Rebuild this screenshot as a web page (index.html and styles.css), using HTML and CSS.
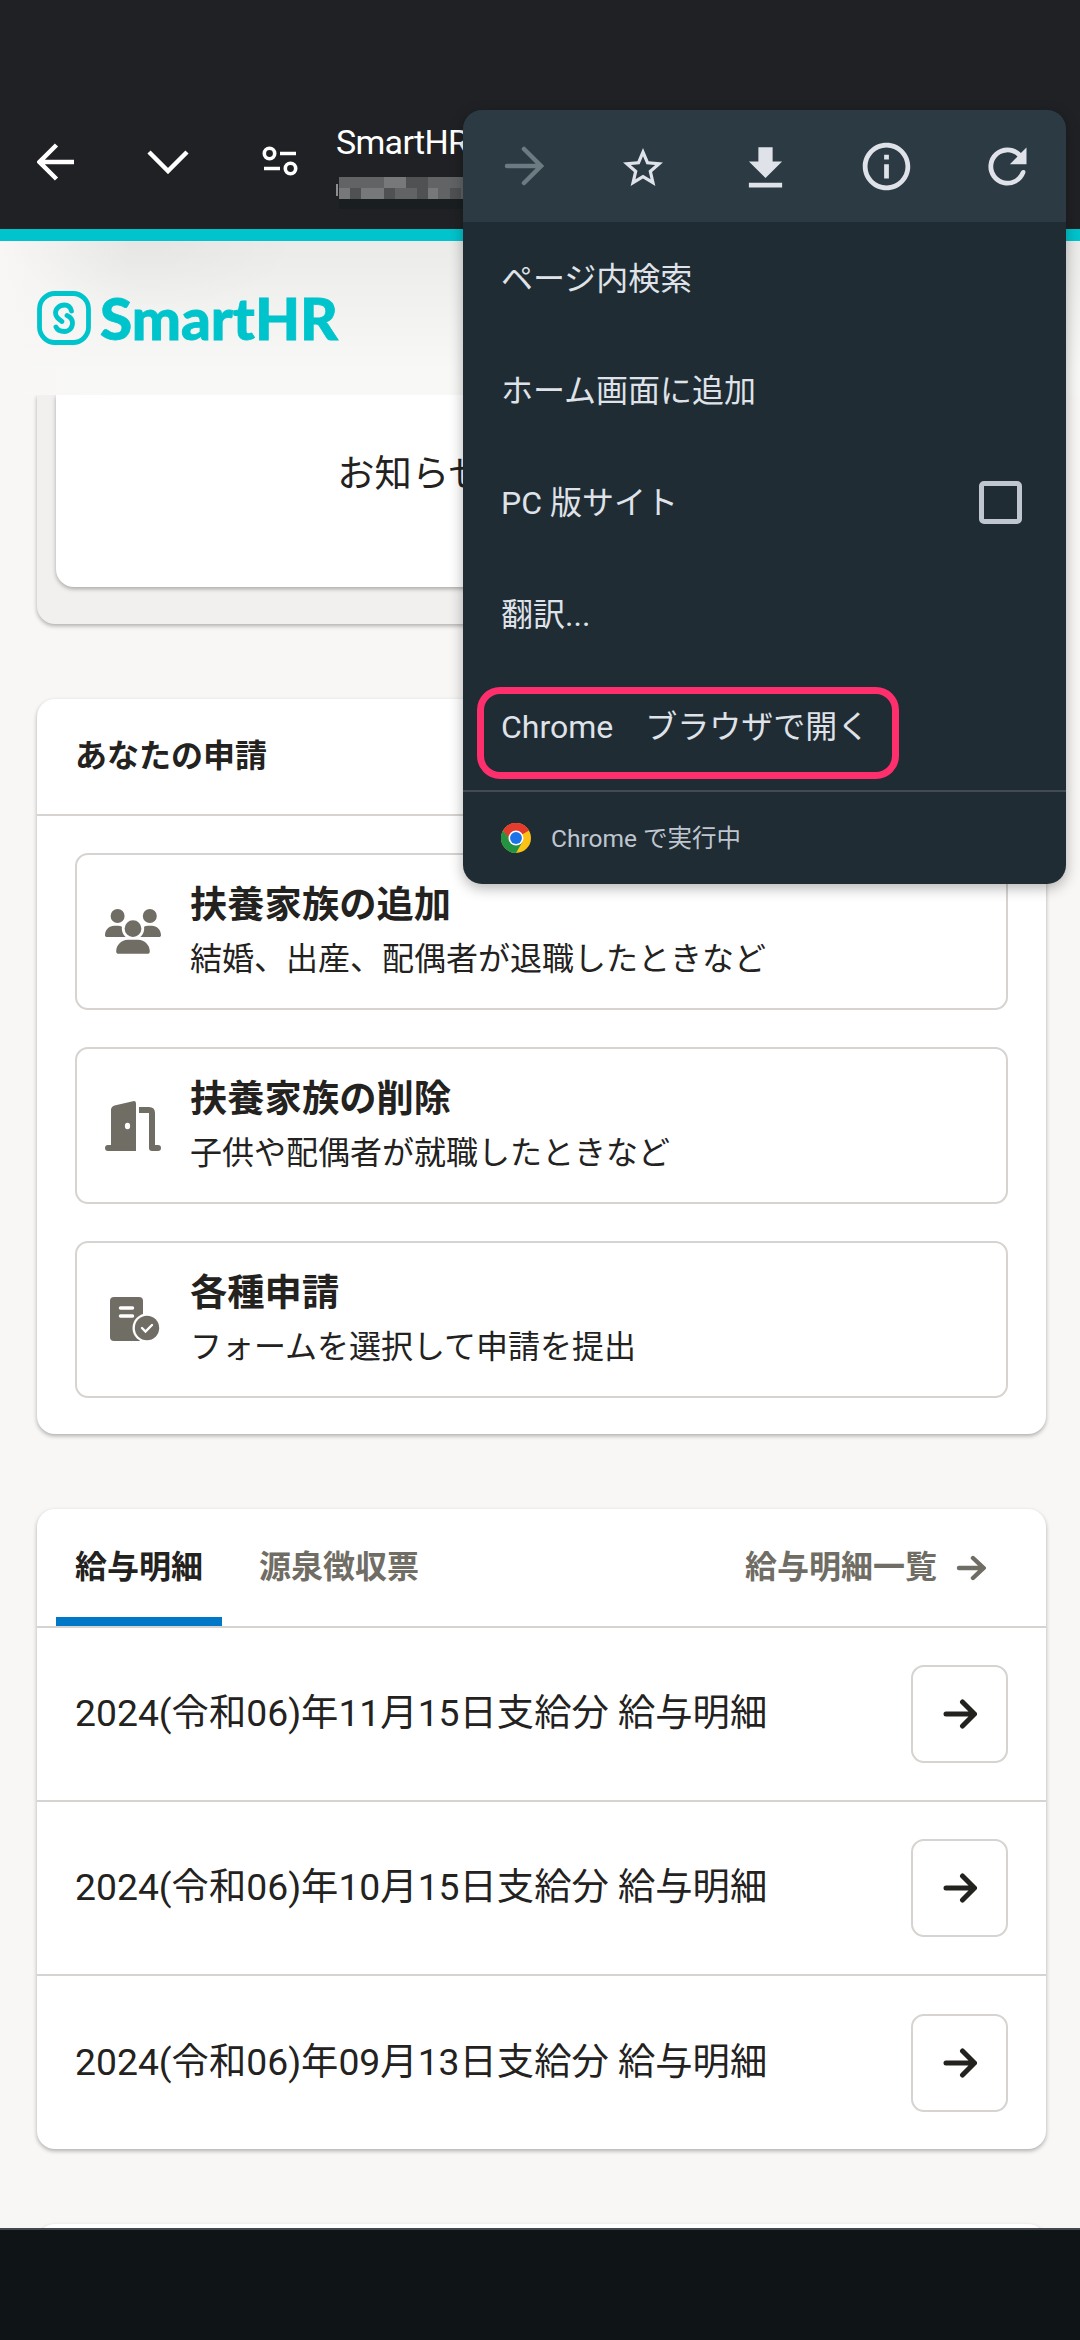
FILE: index.html
```html
<!DOCTYPE html>
<html lang="ja">
<head>
    <meta charset="UTF-8">
    <title>SmartHR</title>
    <link rel="stylesheet" href="styles.css">
</head>
<body>
    <div class="screen">
        <!-- ブラウザのツールバー -->
        <div class="toolbar">
            <svg class="tool-icon back" viewBox="0 0 38 38"><path d="M37 19H4M19.500 2L2.500 19l17 17" /></svg>
            <svg class="tool-icon down" viewBox="0 0 42 24"><path d="M2 2l19 19L40 2" /></svg>
            <svg class="tool-icon tune" viewBox="0 0 36 30"><circle cx="7.500" cy="7.500" r="5.200" /><circle cx="28.500" cy="22.500" r="5.200" /><path d="M18 7.500h16M2 22.500h16" /></svg>
            <div class="address">
                <div class="address-title">SmartHR</div>
                <svg class="address-mask" viewBox="0 0 132 32">
                    <path fill="#191f20" d="M3 22h129v10H3z" />
                    <path fill="#626365" d="M3 0h129v22H3z" />
                    <path fill="#77787a" d="M48 0h22v11H48zM3 11h11v11H3zM25 11h23v11H25zM91 11h11v11H91z" />
                    <path fill="#505153" d="M14 11h11v11H14zM48 11h11v11H48zM70 0h11v11H70zM81 0h11v22H81zM114 11h11v11h-11z" />
                    <path fill="#8d8e90" d="M0 7h2v12H0z" />
                </svg>
            </div>
        </div>

        <div class="page">
            <div class="header">
                <svg class="logo-mark" viewBox="0 0 54 54">
                    <rect x="2.500" y="2.500" width="49" height="49" rx="15.500" />
                    <path d="M34.500 20C33.500 16 31 14 27.500 14C22 14 18.500 18 18.500 22C18.500 26 21.500 28 25 30.500M30 24.500C33.500 26 35.500 28.500 35.500 32C35.500 37 32 40.500 27.500 40.500C23.500 40.500 20.500 39.500 19 36" />
                </svg>
                <svg class="logo-text" viewBox="0 0 240 60"><text x="-1" y="52" textLength="238" lengthAdjust="spacingAndGlyphs">SmartHR</text></svg>
            </div>

            <div class="content">
                <div class="card notice">
                    <div class="notice-body">お知らせはありません。</div>
                </div>

                <div class="card">
                    <h2 class="card-title">あなたの申請</h2>
                    <div class="request-list">
                        <a class="request">
                            <svg class="request-icon" viewBox="0 0 640 512"><path d="M144 0a80 80 0 1 1 0 160A80 80 0 1 1 144 0zM512 0a80 80 0 1 1 0 160A80 80 0 1 1 512 0zM0 298.700C0 239.800 47.800 192 106.700 192h42.700c15.900 0 31 3.500 44.600 9.700c-1.300 7.200-1.900 14.700-1.900 22.300c0 38.200 16.800 72.500 43.300 96H21.300C9.600 320 0 310.400 0 298.700zM405.300 320h-.7c26.600-23.500 43.300-57.800 43.300-96c0-7.600-.7-15-1.900-22.300c13.600-6.300 28.700-9.700 44.600-9.700h42.700C592.200 192 640 239.800 640 298.700c0 11.800-9.600 21.300-21.300 21.300H405.300zM224 224a96 96 0 1 1 192 0 96 96 0 1 1-192 0zM128 485.300C128 411.700 187.700 352 261.300 352h117.400C452.300 352 512 411.700 512 485.300c0 14.700-11.900 26.700-26.700 26.700H154.700c-14.700 0-26.700-11.900-26.700-26.700z" /></svg>
                            <div class="request-text">
                                <div class="request-name">扶養家族の追加</div>
                                <div class="request-desc">結婚、出産、配偶者が退職したときなど</div>
                            </div>
                        </a>
                        <a class="request">
                            <svg class="request-icon door" viewBox="0 0 56 50"><path d="M6 9q0-3.500 3.500-4.500L28 .200q3-.7 3 2.300V50H3a3 3 0 0 1 0-6h3zM34 6h10q6 0 6 6v32h3a3 3 0 0 1 0 6h-6q-3 0-3-3V12H34z" /><ellipse class="hole" cx="22.500" cy="25" rx="2.600" ry="3.200" /></svg>
                            <div class="request-text">
                                <div class="request-name">扶養家族の削除</div>
                                <div class="request-desc">子供や配偶者が就職したときなど</div>
                            </div>
                        </a>
                        <a class="request">
                            <svg class="request-icon form" viewBox="0 0 56 45"><rect x="5" y="0" width="33" height="44" rx="4" /><path class="line" d="M15.500 11h12M15.500 19h12" /><circle class="hole" cx="42" cy="31" r="14.500" /><circle cx="42" cy="31" r="12.200" /><path class="line thin" d="M37 31l3.500 3.500 6.500-6.500" /></svg>
                            <div class="request-text">
                                <div class="request-name">各種申請</div>
                                <div class="request-desc">フォームを選択して申請を提出</div>
                            </div>
                        </a>
                    </div>
                </div>

                <div class="card">
                    <div class="tabs">
                        <div class="tab active">給与明細</div>
                        <div class="tab">源泉徴収票</div>
                        <a class="tab-link">給与明細一覧<svg viewBox="0 0 30 26"><path d="M3 13h24M17 3l10.500 10L17 23" /></svg></a>
                    </div>
                    <div class="slip">
                        <span>2024(令和06)年11月15日支給分 給与明細</span>
                        <button class="slip-button"><svg viewBox="0 0 34 30"><path d="M3 15h28M19.500 3l12 12-12 12" /></svg></button>
                    </div>
                    <div class="slip">
                        <span>2024(令和06)年10月15日支給分 給与明細</span>
                        <button class="slip-button"><svg viewBox="0 0 34 30"><path d="M3 15h28M19.500 3l12 12-12 12" /></svg></button>
                    </div>
                    <div class="slip">
                        <span>2024(令和06)年09月13日支給分 給与明細</span>
                        <button class="slip-button"><svg viewBox="0 0 34 30"><path d="M3 15h28M19.500 3l12 12-12 12" /></svg></button>
                    </div>
                </div>

                <div class="card next-card"></div>
            </div>
        </div>

        <div class="bottom-bar"></div>

        <!-- オーバーフローメニュー -->
        <div class="menu">
            <div class="menu-icons">
                <svg class="forward" viewBox="0 0 40 40"><path d="M3 20h33M20 3l17 17-17 17" /></svg>
                <svg class="star" viewBox="0 0 24 24"><path d="M22 9.240l-7.190-.62L12 2 9.190 8.630 2 9.240l5.460 4.730L5.820 21 12 17.270 18.180 21l-1.630-7.030L22 9.240zM12 15.400l-3.760 2.270 1-4.280-3.320-2.880 4.380-.38L12 6.100l1.710 4.040 4.380.38-3.320 2.880 1 4.280L12 15.400z" /></svg>
                <svg class="download" viewBox="0 0 24 24"><path d="M19 9h-4V3H9v6H5l7 7 7-7zM5 18v2h14v-2H5z" /></svg>
                <svg viewBox="0 0 24 24"><path d="M11 7h2v2h-2zm0 4h2v6h-2zm1-9C6.480 2 2 6.480 2 12s4.480 10 10 10 10-4.480 10-10S17.520 2 12 2zm0 18c-4.410 0-8-3.590-8-8s3.590-8 8-8 8 3.590 8 8-3.590 8-8 8z" /></svg>
                <svg viewBox="0 0 24 24"><path d="M17.650 6.350A7.960 7.960 0 0 0 12 4a8 8 0 1 0 7.500 10.700q.3-1-.6-1.200-.9-.2-1.300.7A6 6 0 1 1 16.220 7.780L13 11h7V4z" /></svg>
            </div>
            <div class="menu-items">
                <div class="menu-item">ページ内検索</div>
                <div class="menu-item">ホーム画面に追加</div>
                <div class="menu-item">PC 版サイト<span class="checkbox"></span></div>
                <div class="menu-item">翻訳...</div>
                <div class="menu-item marked">Chrome　ブラウザで開く</div>
            </div>
            <div class="menu-footer">
                <svg viewBox="0 0 48 48">
                    <circle cx="24" cy="24" r="24" fill="#fbc116" />
                    <path fill="#e33b2e" d="M24 24L3.200 12A24 24 0 0 1 44.800 12z" />
                    <path fill="#229342" d="M3.200 12A24 24 0 0 0 24 48L34.400 30 24 24 13.600 30z" />
                    <path fill="#e33b2e" d="M3.200 12L13.600 30 24 24V12z" />
                    <path fill="#229342" d="M3.200 12L13.600 30l9 5z" />
                    <circle cx="24" cy="24" r="12" fill="#fff" />
                    <circle cx="24" cy="24" r="9.500" fill="#1a73e8" />
                </svg>
                <span>Chrome で実行中</span>
            </div>
        </div>
    </div>
</body>
</html>
```

FILE: styles.css
```css
:root {
    --brand: #00c4cc;
    --text: #23221e;
    --text-grey: #706d65;
    --border: #d6d3d0;
    --base: #f8f7f6;
    --menu-text: #dfe2e8;
}

*,
*::before {
    box-sizing: border-box;
    margin: 0;
    padding: 0;
}

body {
    font-family: Roboto, "Noto Sans CJK JP", sans-serif;
    color: var(--text);
}

svg {
    display: block;
    flex: none;
}

.screen {
    position: relative;
    display: flex;
    flex-direction: column;
    width: 1080px;
    height: 2340px;
    overflow: hidden;
    background: var(--base);
}

/* toolbar */
.toolbar {
    display: flex;
    align-items: flex-start;
    height: 229px;
    flex: none;
    padding: 122px 0 0 37px;
    background: #202124;
}

.tool-icon {
    fill: none;
    stroke: #fff;
    stroke-width: 4.500;
}

.back {
    width: 38px;
    margin-top: 21px;
}

.down {
    width: 42px;
    margin: 28px 0 0 72px;
}

.tune {
    width: 36px;
    margin: 24px 0 0 73px;
    stroke-width: 3.600;
}

.address {
    margin-left: 38px;
}

.address-title {
    height: 55px;
    font-size: 34px;
    line-height: 40px;
    letter-spacing: -0.7px;
    color: #fff;
}

.address-mask {
    width: 132px;
}

/* page */
.page {
    flex: 1;
    overflow: hidden;
    border-top: 12px solid var(--brand);
}

.header {
    display: flex;
    align-items: center;
    height: 154px;
    padding: 0 37px;
    background:
        radial-gradient(ellipse 150px 70px at 150px 0, rgba(0, 0, 0, 0.025), transparent),
        linear-gradient(90deg, var(--base), rgba(248, 247, 246, 0) 130px),
        linear-gradient(#ebebea, #f8f8f6 85%);
}

.logo-mark {
    width: 54px;
    fill: none;
    stroke: var(--brand);
    stroke-width: 4.800;
    stroke-linecap: round;
}

.logo-text {
    width: 240px;
    margin-left: 10px;
    overflow: visible;
    fill: var(--brand);
    stroke: var(--brand);
    stroke-width: 0.8;
    font-family: Lato, sans-serif;
    font-size: 58px;
    font-weight: 900;
}

.content {
    display: flex;
    flex-direction: column;
    gap: 75px;
    padding: 0 34px 0 37px;
}

.card {
    flex: none;
    background: #fff;
    border-radius: 18px;
    box-shadow: 0 2px 4px rgba(3, 3, 2, 0.3);
}

.notice {
    height: 229px;
    padding: 0 19px 37px;
    background: #f1f0ee;
    border-radius: 0 0 18px 18px;
    clip-path: inset(0 -10px -10px);
}

.notice-body {
    height: 192px;
    padding-top: 51px;
    background: #fff;
    border-radius: 0 0 18px 18px;
    box-shadow: 0 2px 4px rgba(3, 3, 2, 0.3);
    clip-path: inset(0 -10px -10px);
    font-size: 37.300px;
    line-height: 56px;
    text-align: center;
}

.card-title {
    height: 117px;
    padding: 0 38px;
    border-bottom: 2px solid var(--border);
    font-size: 32px;
    line-height: 115px;
}

.request-list {
    display: flex;
    flex-direction: column;
    gap: 37px;
    padding: 37px 38px 36px;
}

.request {
    display: flex;
    align-items: center;
    gap: 29px;
    height: 157px;
    padding: 0 28px;
    border: 2px solid var(--border);
    border-radius: 13px;
}

.request-icon {
    width: 56px;
    fill: var(--text-grey);
}

.request-icon .hole {
    fill: #fff;
}

.request-icon circle:not(.hole) {
    fill: var(--text-grey);
}

.request-icon .line {
    fill: none;
    stroke: #fff;
    stroke-width: 3.500;
    stroke-linecap: round;
}

.request-icon .thin {
    stroke-width: 2.400;
}

.request-name {
    font-size: 37.300px;
    font-weight: bold;
    line-height: 56px;
}

.request-desc {
    font-size: 32px;
    line-height: 53px;
}

.tabs {
    display: flex;
    height: 119px;
    padding: 0 19px;
    border-bottom: 2px solid var(--border);
    font-size: 32px;
    font-weight: bold;
    line-height: 117px;
    color: var(--text-grey);
}

.tab {
    padding: 0 19px;
}

.active {
    margin-right: 18px;
    color: var(--text);
    box-shadow: inset 0 -9px #0077c7;
}

.tab-link {
    display: flex;
    align-items: center;
    gap: 19px;
    margin-left: auto;
    padding-right: 41px;
}

.tab-link svg {
    width: 30px;
    fill: none;
    stroke: var(--text-grey);
    stroke-width: 4.400;
    stroke-linecap: round;
}

.slip {
    display: flex;
    align-items: center;
    justify-content: space-between;
    height: 174px;
    padding: 0 38px;
    border-bottom: 2px solid var(--border);
    font-size: 37.300px;
}

.slip span {
    padding-bottom: 8px;
}

.slip:last-child {
    height: 173px;
    border-bottom: none;
}

.slip-button {
    display: flex;
    align-items: center;
    justify-content: center;
    width: 97px;
    height: 98px;
    background: #fff;
    border: 2px solid var(--border);
    border-radius: 13px;
}

.slip-button svg {
    width: 34px;
    fill: none;
    stroke: var(--text);
    stroke-width: 5;
    stroke-linecap: round;
}

.next-card {
    height: 100px;
}

.bottom-bar {
    flex: none;
    height: 112px;
    background: #0f1416;
    border-top: 2px solid #434850;
}

/* menu */
.menu {
    position: absolute;
    left: 463px;
    top: 110px;
    width: 603px;
    height: 774px;
    overflow: hidden;
    background: #202c33;
    border-radius: 19px;
    box-shadow: 0 4px 14px rgba(0, 0, 0, 0.3);
    color: var(--menu-text);
}

.menu-icons {
    display: grid;
    grid-template-columns: repeat(5, 121px);
    place-items: center;
    height: 112px;
    background: #2b3a43;
}

.menu-icons svg {
    width: 57px;
    fill: var(--menu-text);
}

.menu-icons .forward {
    width: 40px;
    fill: none;
    stroke: #6c7a81;
    stroke-width: 4.500;
    stroke-linecap: round;
}

.menu-icons .star {
    width: 48px;
    margin: 4px 3px 0 0;
}

.menu-icons .download {
    margin-top: 4px;
}

.menu-items {
    height: 570px;
    border-bottom: 2px solid #424b51;
}

.menu-item {
    display: flex;
    align-items: center;
    justify-content: space-between;
    height: 112px;
    padding: 0 44px 4px 38px;
    font-size: 32px;
}

.checkbox {
    width: 43px;
    height: 43px;
    margin-top: 4px;
    border: 5px solid #bfc6d0;
    border-radius: 5px;
}

.marked {
    position: relative;
}

.marked::before {
    content: "";
    position: absolute;
    left: 14px;
    top: 17px;
    width: 422px;
    height: 92px;
    border: 7px solid #ff2e6c;
    border-radius: 23px;
}

.menu-footer {
    display: flex;
    align-items: center;
    gap: 20px;
    height: 92px;
    padding-left: 38px;
    font-size: 24.500px;
    color: #bfc6d0;
}

.menu-footer svg {
    width: 30px;
}

.menu-footer span {
    padding-bottom: 4px;
}
```
